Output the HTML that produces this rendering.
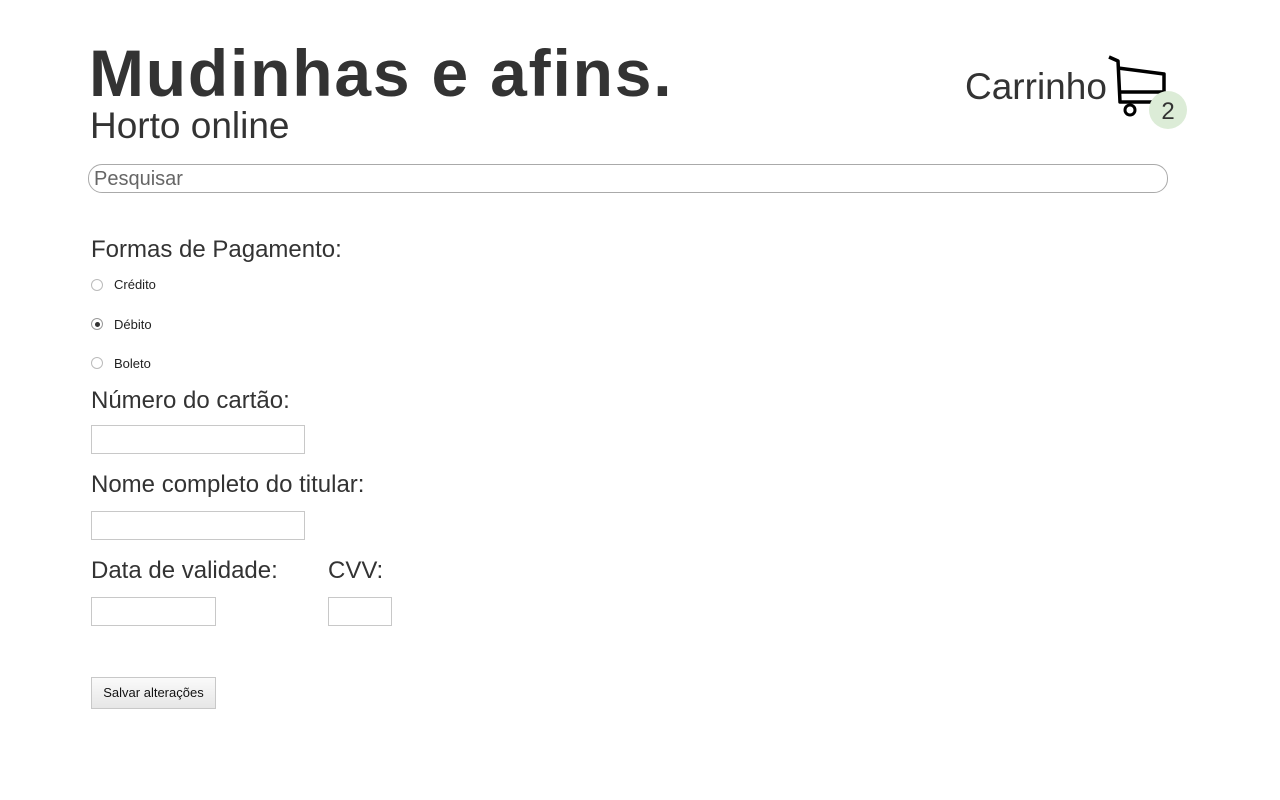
<!DOCTYPE html>
<html><head><meta charset="utf-8"><style>
body{margin:0;background:#fff;font-family:"Liberation Sans",Arial,sans-serif;color:#333;}
.abs{position:absolute;white-space:nowrap}
.title{left:89px;top:35px;font-size:66px;font-weight:bold;letter-spacing:1.8px;color:#333}
.sub{left:90px;top:105px;font-size:37px;color:#333}
.cart{left:965px;top:66px;font-size:37px;color:#333}
.search{left:88px;top:164px;width:1078px;height:27px;border:1px solid #aaa;border-radius:14px}
.search span{position:absolute;left:5px;top:3px;font-size:20px;color:#666}
.lbl{font-size:24px;color:#333;left:91px}
.radio{left:91px;width:12px;height:12px;border:1px solid #bbb;border-radius:50%;box-sizing:border-box}
.rl{left:114px;font-size:13px;color:#222}
.inp{border:1px solid #c8c8c8;box-sizing:border-box;height:29px}
.btn{left:91px;top:677px;width:125px;height:32px;box-sizing:border-box;border:1px solid #c8c8c8;background:linear-gradient(#fafafa,#e6e6e6);font-size:13px;color:#111;text-align:center;line-height:30px}
</style></head><body>
<div class="abs title">Mudinhas e afins.</div>
<div class="abs sub">Horto online</div>
<div class="abs cart">Carrinho</div>
<svg class="abs" style="left:1105px;top:52px" width="90" height="80" viewBox="0 0 90 80">
<path d="M4 5 L13 9 L15 50 L60 50" fill="none" stroke="#000" stroke-width="3.5" stroke-linejoin="round"/>
<path d="M13 16 L59 22 L59 40 L15 40" fill="none" stroke="#000" stroke-width="3.5" stroke-linejoin="round"/>
<circle cx="25" cy="58" r="5" fill="none" stroke="#000" stroke-width="3"/>
<circle cx="63" cy="58" r="19" fill="#dcecd7"/>
<text x="63" y="67" font-family="Liberation Sans,sans-serif" font-size="24" fill="#333" text-anchor="middle">2</text>
</svg>
<div class="abs search"><span>Pesquisar</span></div>
<div class="abs lbl" style="top:236px">Formas de Pagamento:</div>
<div class="abs radio" style="top:279px"></div><div class="abs rl" style="top:277px">Crédito</div>
<div class="abs radio" style="top:318px;border-color:#999"><div style="width:5px;height:5px;background:#333;border-radius:50%;margin:2.5px"></div></div><div class="abs rl" style="top:317px">Débito</div>
<div class="abs radio" style="top:357px"></div><div class="abs rl" style="top:356px">Boleto</div>
<div class="abs lbl" style="top:387px">Número do cartão:</div>
<div class="abs inp" style="left:91px;top:425px;width:214px"></div>
<div class="abs lbl" style="top:471px">Nome completo do titular:</div>
<div class="abs inp" style="left:91px;top:511px;width:214px"></div>
<div class="abs lbl" style="top:557px">Data de validade:</div>
<div class="abs lbl" style="top:557px;left:328px">CVV:</div>
<div class="abs inp" style="left:91px;top:597px;width:125px"></div>
<div class="abs inp" style="left:328px;top:597px;width:64px"></div>
<div class="abs btn">Salvar alterações</div>
</body></html>
